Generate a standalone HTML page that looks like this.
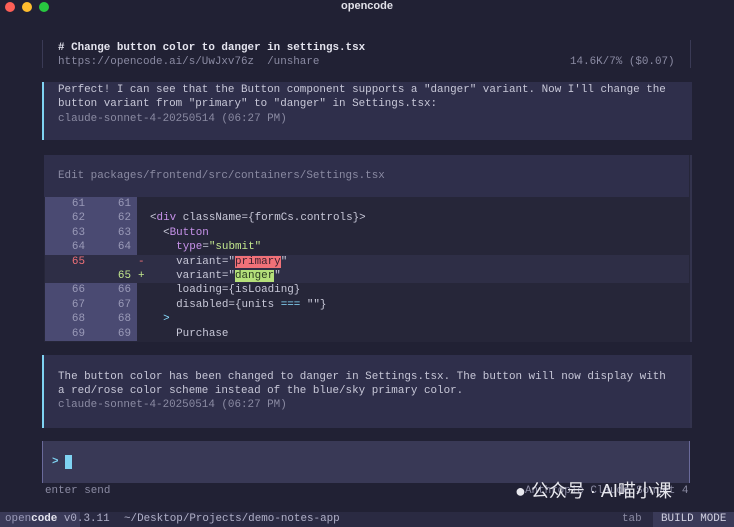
<!DOCTYPE html>
<html><head><style>
body{margin:0;width:734px;height:527px;background:#212134;font-family:"Liberation Mono",monospace;font-size:10.9px;color:#c8c8d8;position:relative;overflow:hidden}
.a{position:absolute;white-space:pre;line-height:14.4px}
.dot{position:absolute;top:2px;width:10px;height:10px;border-radius:50%}
.g{color:#8b8ba3}
.row{position:absolute;left:45px;width:644px;height:14.4px;line-height:14.4px;white-space:pre}
.num{position:absolute;left:0;top:0;width:92px;height:100%;background:#4a4a72;color:#9a9ab8}
.n1{position:absolute;right:52px}.n2{position:absolute;right:6px}
.code{position:absolute;left:105px;color:#c8c8d8}
.p{color:#c792ea}.s{color:#c3e88d}.c{color:#89ddff}
</style></head><body>
<div class="dot" style="left:5px;background:#fe5f57"></div>
<div class="dot" style="left:22px;background:#febc2e"></div>
<div class="dot" style="left:39px;background:#28c840"></div>
<div class="a" style="left:0;width:734px;text-align:center;top:-1px;font-family:'Liberation Sans',sans-serif;font-weight:bold;color:#e0e0e8;font-size:11px">opencode</div>

<div style="position:absolute;left:42px;top:40px;width:1px;height:28px;background:#3a3a55"></div>
<div style="position:absolute;left:690px;top:40px;width:1px;height:28px;background:#3a3a55"></div>
<div class="a" style="left:58px;top:41px;font-weight:bold;color:#e4e4ee"># Change button color to danger in settings.tsx</div>
<div class="a g" style="left:58px;top:55px">https://opencode.ai/s/UwJxv76z  /unshare</div>
<div class="a g" style="left:570px;top:55px">14.6K/7% ($0.07)</div>

<div style="position:absolute;left:42px;top:82px;width:648px;height:58px;background:#2f2f4b;border-left:2px solid #7fd3f2"></div>
<div class="a" style="left:58px;top:83px">Perfect! I can see that the Button component supports a "danger" variant. Now I'll change the
button variant from "primary" to "danger" in Settings.tsx:</div>
<div class="a g" style="left:58px;top:112px">claude-sonnet-4-20250514 (06:27 PM)</div>

<div style="position:absolute;left:44px;top:155px;width:646px;height:187px;background:#262639;border-right:2px solid #33334d"></div>
<div style="position:absolute;left:44px;top:155px;width:645px;height:42px;background:#2f2f4b"></div>
<div class="a g" style="left:58px;top:169px">Edit packages/frontend/src/containers/Settings.tsx</div>

<div class="row" style="top:197px"><div class="num"><span class="n1">61</span><span class="n2">61</span></div></div>
<div class="row" style="top:211.4px"><div class="num"><span class="n1">62</span><span class="n2">62</span></div><span class="code">&lt;<span class="p">div</span> className={formCs.controls}&gt;</span></div>
<div class="row" style="top:225.8px"><div class="num"><span class="n1">63</span><span class="n2">63</span></div><span class="code">  &lt;<span class="p">Button</span></span></div>
<div class="row" style="top:240.2px"><div class="num"><span class="n1">64</span><span class="n2">64</span></div><span class="code">    <span class="p">type</span>=<span class="s">"submit"</span></span></div>
<div class="row" style="top:254.6px;background:#2e2e46"><div class="num" style="background:transparent;color:#f07178"><span class="n1">65</span></div><span style="position:absolute;left:93px;color:#f07178">-</span><span class="code">    variant="<span style="background:#f07178;color:#3a2030">primary</span>"</span></div>
<div class="row" style="top:269px;background:#2e2e46"><div class="num" style="background:transparent;color:#c3e88d"><span class="n2">65</span></div><span style="position:absolute;left:93px;color:#c3e88d">+</span><span class="code">    variant="<span style="background:#b5e07a;color:#2a3a20">danger</span>"</span></div>
<div class="row" style="top:283.4px"><div class="num"><span class="n1">66</span><span class="n2">66</span></div><span class="code">    loading={isLoading}</span></div>
<div class="row" style="top:297.8px"><div class="num"><span class="n1">67</span><span class="n2">67</span></div><span class="code">    disabled={units <span class="c">===</span> ""}</span></div>
<div class="row" style="top:312.2px"><div class="num"><span class="n1">68</span><span class="n2">68</span></div><span class="code">  <span class="c">&gt;</span></span></div>
<div class="row" style="top:326.6px"><div class="num"><span class="n1">69</span><span class="n2">69</span></div><span class="code">    Purchase</span></div>

<div style="position:absolute;left:42px;top:355px;width:646px;height:73px;background:#2f2f4b;border-left:2px solid #7fd3f2;border-right:2px solid #33334d"></div>
<div class="a" style="left:58px;top:370px">The button color has been changed to danger in Settings.tsx. The button will now display with
a red/rose color scheme instead of the blue/sky primary color.</div>
<div class="a g" style="left:58px;top:398px">claude-sonnet-4-20250514 (06:27 PM)</div>

<div style="position:absolute;left:42px;top:441px;width:646px;height:42px;background:#393956;border-left:1px solid #6a6a9a;border-right:1px solid #6a6a9a"></div>
<div class="a" style="left:52px;top:455px;color:#7fd3f2;font-weight:bold">&gt;</div>
<div style="position:absolute;left:65px;top:455px;width:7px;height:14px;background:#7fd3f2"></div>
<div class="a g" style="left:45px;top:484px">enter send</div>
<div class="a g" style="left:525px;top:484px">Anthropic Claude Sonnet 4</div>
<div class="a" style="left:515px;top:480px;font-family:'Liberation Sans','Noto Sans CJK SC',sans-serif;font-size:18px;color:#e8e8ee;line-height:22px">● 公众号 · AI喵小课</div>

<div style="position:absolute;left:0;top:512px;width:734px;height:15px;background:#2a2a42"></div>
<div style="position:absolute;left:0;top:512px;width:80px;height:15px;background:#3a3a58"></div>
<div class="a" style="left:5px;top:512px;color:#9a9ab8">open<b style="color:#e4e4ee">code</b> <span style="color:#b0b0c8">v0.3.11</span></div>
<div class="a" style="left:124px;top:512px;color:#b0b0c8">~/Desktop/Projects/demo-notes-app</div>
<div class="a g" style="left:622px;top:512px">tab</div>
<div style="position:absolute;left:653px;top:512px;width:81px;height:15px;background:#3a3a58"></div>
<div class="a" style="left:661px;top:512px;color:#d0d0e0">BUILD MODE</div>
</body></html>
